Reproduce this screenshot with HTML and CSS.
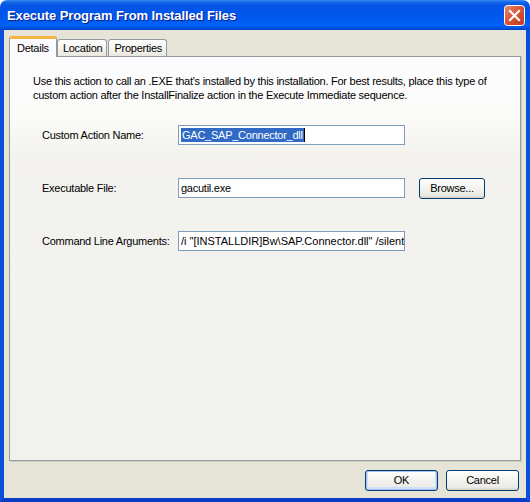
FILE: index.html
```html
<!DOCTYPE html>
<html>
<head>
<meta charset="utf-8">
<link rel="stylesheet" href="styles.css">
</head>
<body>
<div class="window">
  <div class="titlebar">
    <span class="title">Execute Program From Installed Files</span>
    <span class="close">
      <svg width="21" height="21" viewBox="0 0 21 21">
        <defs>
          <linearGradient id="cg" x1="0" y1="0" x2="1" y2="1">
            <stop offset="0" stop-color="#E98B70"/>
            <stop offset="0.45" stop-color="#D9573A"/>
            <stop offset="1" stop-color="#C0391A"/>
          </linearGradient>
        </defs>
        <rect x="0.5" y="0.5" width="20" height="20" rx="3" fill="url(#cg)" stroke="#FFFFFF"/>
        <path d="M6 6 L15 15 M15 6 L6 15" stroke="#FFFFFF" stroke-width="2.2" stroke-linecap="square"/>
      </svg>
    </span>
  </div>
  <div class="frame">
    <div class="tabs">
      <div class="tab active">Details</div>
      <div class="tab">Location</div>
      <div class="tab">Properties</div>
    </div>
    <div class="panel">
      <p class="desc">Use this action to call an .EXE that's installed by this installation. For best results, place this type of<br>custom action after the InstallFinalize action in the Execute Immediate sequence.</p>
      <div class="form">
        <div class="label">Custom Action Name:</div>
        <div class="field"><span class="sel">GAC_SAP_Connector_dll</span><span class="caret"></span></div>
        <div></div>

        <div class="label">Executable File:</div>
        <div class="field">gacutil.exe</div>
        <div class="btn browse">Browse...</div>

        <div class="label">Command Line Arguments:</div>
        <div class="field wide">/i "[INSTALLDIR]Bw\SAP.Connector.dll" /silent</div>
        <div></div>
      </div>
    </div>
    <div class="buttons">
      <div class="btn default">OK</div>
      <div class="btn">Cancel</div>
    </div>
  </div>
</div>
</body>
</html>
```
FILE: styles.css
```css
html, body {
  margin: 0;
  padding: 0;
  background: #ffffff;
}

body {
  font-family: "Liberation Sans", Arial, sans-serif;
  font-size: 11px;
  letter-spacing: -0.25px;
  color: #000;
}

.window {
  width: 530px;
  height: 502px;
  display: flex;
  flex-direction: column;
}

.titlebar {
  height: 30px;
  flex: none;
  display: flex;
  align-items: center;
  justify-content: space-between;
  padding: 0 5px 0 7px;
  box-sizing: border-box;
  border-radius: 7px 7px 0 0;
  background: linear-gradient(to bottom,
    #3A8CF6 0px, #1668E8 2px, #0655E4 5px, #0055EA 12px,
    #005AF0 20px, #0062F6 25px, #0053E0 28px, #0040C8 30px);
}

.title {
  color: #ffffff;
  font-family: "Liberation Sans", Arial, sans-serif;
  font-weight: bold;
  font-size: 13px;
  text-shadow: 1px 1px 0 #0A1C8A;
  letter-spacing: -0.1px;
  margin-top: 1px;
}

.close {
  width: 21px;
  height: 21px;
  display: block;
}

.close svg {
  display: block;
}

.frame {
  flex: 1;
  display: flex;
  flex-direction: column;
  background: #E6E4D6;
  border-left: 4px solid #0B4FDC;
  border-right: 4px solid #0B4FDC;
  border-bottom: 4px solid #0A3EC8;
  padding: 6px 5px 7px 5px;
  min-height: 0;
}

.tabs {
  display: flex;
  align-items: flex-end;
  height: 20px;
  flex: none;
  position: relative;
  z-index: 1;
}

.tab {
  height: 16px;
  line-height: 16px;
  padding: 0 4px 0 5px;
  border: 1px solid #919B9C;
  border-bottom: none;
  border-radius: 3px 3px 0 0;
  background: linear-gradient(to bottom, #FFFFFF, #F1F0EA 70%, #E8E7DF);
  margin-right: 1px;
}

.tab.active {
  height: 18px;
  line-height: 18px;
  padding: 0 7px;
  border-top: 3px solid #F5B443;
  background: #FCFCFE;
  margin-bottom: -1px;
  margin-right: 0;
}

.panel {
  flex: 1;
  border: 1px solid #919B9C;
  box-shadow: 1px 1px 0 #CFCDBE;
  background: linear-gradient(to bottom, #FCFCFE 0px, #FBFBF9 60px, #F3F2EE 100px, #F1F1ED 100%);
  padding: 17px 20px 0 23px;
  min-height: 0;
}

.desc {
  margin: 0;
  line-height: 14px;
  white-space: nowrap;
}

.form {
  margin: 23px 0 0 9px;
  display: grid;
  grid-template-columns: 122px 227px 66px;
  grid-auto-rows: 20px;
  column-gap: 14px;
  row-gap: 33px;
  align-items: center;
}

.label {
  white-space: nowrap;
}

.field {
  height: 20px;
  box-sizing: border-box;
  border: 1px solid #7F9DB9;
  background: #ffffff;
  padding: 0 0 0 2px;
  line-height: 18px;
  white-space: nowrap;
  overflow: hidden;
  display: flex;
  align-items: center;
}

.field.wide {
  letter-spacing: 0;
}

.sel {
  background: #316AC5;
  color: #ffffff;
  line-height: 14px;
  padding: 0 1px;
}

.caret {
  width: 1px;
  height: 14px;
  background: #000;
}

.btn {
  height: 21px;
  box-sizing: border-box;
  border: 1px solid #003C74;
  border-radius: 3px;
  background: linear-gradient(to bottom, #FFFFFF 0%, #F4F4F0 40%, #ECEBE6 85%, #D6D0C5 100%);
  display: flex;
  align-items: center;
  justify-content: center;
  line-height: 1;
}

.browse {
  width: 66px;
}

.buttons {
  flex: none;
  display: flex;
  justify-content: flex-end;
  gap: 8px;
  margin-top: 9px;
  padding-right: 2px;
}

.buttons .btn {
  width: 73px;
}

.btn.default {
  box-shadow: inset 0 0 0 1px #A8C4EE, inset 0 -1px 0 2px #CEDEF6;
}
```
